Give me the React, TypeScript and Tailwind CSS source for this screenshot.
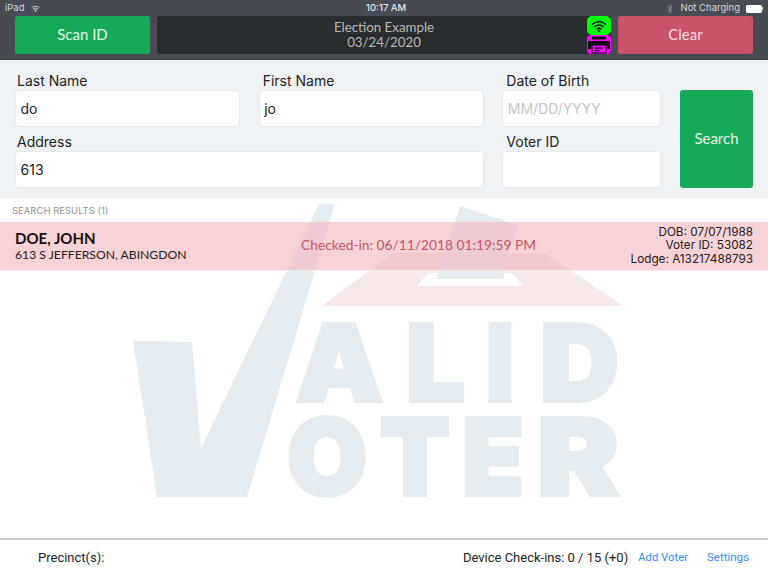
import React from "react";
import { Bluetooth } from "lucide-react";

const sf = "font-['Inter','Liberation_Sans',sans-serif]";
const avenir = "font-['Lato','Open_Sans',sans-serif]";

// x and width of each watermark letter, measured off the logo
const ALID = [
    { ch: "A", x: 294, w: 91 },
    { ch: "L", x: 404, w: 63 },
    { ch: "I", x: 484, w: 32 },
    { ch: "D", x: 538, w: 83 },
];
const OTER = [
    { ch: "O", x: 285, w: 84 },
    { ch: "T", x: 378, w: 74 },
    { ch: "E", x: 460, w: 66 },
    { ch: "R", x: 535, w: 86 },
];

function WifiIcon({ className, width = 1.6 }: { className?: string; width?: number }) {
    return (
        <svg viewBox="0 0 16 12" className={className} fill="none" stroke="currentColor" strokeWidth={width} strokeLinecap="round">
            <path d="M1.5 4.2a9.5 9.5 0 0 1 13 0" />
            <path d="M3.9 6.6a6 6 0 0 1 8.2 0" />
            <path d="M6.2 8.9a2.7 2.7 0 0 1 3.6 0" />
            <circle cx="8" cy="10.8" r="0.5" fill="currentColor" />
        </svg>
    );
}

function PrinterIcon() {
    return (
        <svg viewBox="0 0 24 19" className="w-[24px] h-[19px]">
            <rect x="0" y="0" width="24" height="19" rx="4" fill="#ff00ff" />
            <rect x="5" y="1.5" width="14" height="3" fill="#111" />
            <path d="M1 6h22v8h-3v-3H4v3H1z" fill="#111" />
            <rect x="5" y="10" width="14" height="8" fill="#ff00ff" stroke="#111" strokeWidth="1.2" />
            <rect x="7.5" y="12.5" width="8" height="1.2" fill="#111" />
            <rect x="7.5" y="15" width="5" height="1.2" fill="#111" />
        </svg>
    );
}

function Watermark() {
    const inset = 2;
    return (
        <svg viewBox="0 0 768 576" className="absolute inset-0 w-[768px] h-[576px]">
            <polygon points="393,253 545,253 623,306 322,306" fill="#f6e7e9" />
            <polygon points="428,273 512,273 523,286 417,286" fill="#ffffff" />
            <polygon points="460,206 518,225 503,279 436,279" fill="#e4ecf2" />
            <polygon points="133,341 192,342 201,448 319,204 335,204 247,497 157,497" fill="#e4ecf2" />
            <g fill="#e4ecf2" stroke="#e4ecf2" strokeWidth={inset * 2} strokeLinejoin="miter" strokeMiterlimit={2} fontFamily="Inter, 'Liberation Sans', sans-serif" fontWeight="900" fontSize="106">
                <text y={403 - inset}>
                    {ALID.map((l) => (
                        <tspan key={l.ch} x={l.x + inset} textLength={l.w - inset * 2} lengthAdjust="spacingAndGlyphs">{l.ch}</tspan>
                    ))}
                </text>
                <text y={497 - inset}>
                    {OTER.map((l) => (
                        <tspan key={l.ch} x={l.x + inset} textLength={l.w - inset * 2} lengthAdjust="spacingAndGlyphs">{l.ch}</tspan>
                    ))}
                </text>
            </g>
        </svg>
    );
}

function Field({ label, value, placeholder, className, inset = "pl-[4px]" }: { label: string; value?: string; placeholder?: string; className?: string; inset?: string }) {
    return (
        <div className={`flex flex-col ${className ?? ""}`}>
            <label className={`h-[18px] text-[14px] leading-[17px] text-[#222] ${inset}`}>{label}</label>
            <input
                readOnly
                value={value ?? ""}
                placeholder={placeholder}
                className="h-[37px] w-full rounded-[4px] border border-[#e6eaee] bg-white px-[4.5px] pb-[1px] text-[14px] text-[#222] outline-none placeholder:text-[#c4c7cb]"
            />
        </div>
    );
}

export default function App() {
    return (
        <div className={`relative flex h-[576px] w-[768px] flex-col overflow-hidden bg-white ${sf}`}>
            <Watermark />

            <header className="relative flex h-[60px] flex-col bg-[#474b54] border-b border-[#3d4047]">
                <div className="relative flex h-[16px] items-center justify-between pl-[5px] pr-[5px] pt-[1px] text-[9.5px] text-[#d4d6d9]">
                    <div className="flex items-center gap-[6px]">
                        <span>iPad</span>
                        <WifiIcon className="w-[9px] h-[7px]" />
                    </div>
                    <span className="absolute left-[366px] font-medium text-[#e6e7e9]">10:17 AM</span>
                    <div className="flex items-center gap-[5px]">
                        <Bluetooth className="w-[10px] h-[10px] text-[#8d9096]" />
                        <span>Not Charging</span>
                        <div className="ml-[1px] flex items-center">
                            <div className="h-[8px] w-[16px] rounded-[1.5px] bg-white" />
                            <div className="h-[3px] w-[1px] bg-[#c9cacc]" />
                        </div>
                    </div>
                </div>
                <div className="flex gap-[7px] pl-[15px] pr-[15px]">
                    <button className={`flex h-[38px] w-[135px] items-center justify-center rounded-[3px] bg-[#17a95a] pb-[2px] text-[15px] text-[#e3f4ea] ${avenir}`}>
                        Scan ID
                    </button>
                    <div className="relative flex h-[38px] flex-1 flex-col items-center justify-center rounded-[3px] bg-[#2a2d2f] pb-[1px] text-[13.3px] leading-[15px] text-[#b6b9bb]">
                        <span className={avenir}>Election Example</span>
                        <span className={avenir}>03/24/2020</span>
                        <div className="absolute right-0 top-0 flex flex-col">
                            <div className="flex h-[19px] w-[24px] items-center justify-center rounded-[5px] bg-[#00ff00] text-[#111]">
                                <WifiIcon className="w-[16px] h-[12px]" width={1.5} />
                            </div>
                            <PrinterIcon />
                        </div>
                    </div>
                    <button className={`flex h-[38px] w-[135px] items-center justify-center rounded-[3px] bg-[#c95368] pb-[2px] text-[15px] text-[#f3dde1] ${avenir}`}>
                        Clear
                    </button>
                </div>
            </header>

            <form className="relative grid h-[138px] grid-cols-[225px_225px_159px_73px] grid-rows-[55px_55px] gap-x-[18.67px] gap-y-[6px] bg-[#eff3f6] pl-[15px] pt-[12px]">
                <Field label="Last Name" value="do" inset="pl-[2px]" />
                <Field label="First Name" value="jo" />
                <Field label="Date of Birth" placeholder="MM/DD/YYYY" />
                <button
                    type="button"
                    className={`col-start-4 row-start-1 row-end-3 mt-[18px] rounded-[3px] bg-[#17a95a] pb-[2px] text-[15px] text-[#e3f4ea] ${avenir}`}
                >
                    Search
                </button>
                <Field label="Address" value="613" className="col-span-2" inset="pl-[2px]" />
                <Field label="Voter ID" />
            </form>

            <main className="relative flex-1">
                <div className="flex h-[24px] items-center pl-[12px] pt-[2px] text-[9.5px] text-[#8f9296]">
                    SEARCH RESULTS (1)
                </div>
                <div className={`flex h-[49px] items-center border-b border-[#ececec] bg-[#f3b6bb]/60 px-[15px] ${avenir}`}>
                    <div className="w-[286px] shrink-0 pb-[1px]">
                        <div className="text-[15px] font-bold leading-[18px] text-[#111]">DOE, JOHN</div>
                        <div className="text-[12.2px] leading-[15px] text-[#222]">613 S JEFFERSON, ABINGDON</div>
                    </div>
                    <div className="pb-[2px] text-[13.8px] text-[#c95368]">Checked-in: 06/11/2018 01:19:59 PM</div>
                    <div className={`ml-auto text-right text-[11.75px] leading-[13.5px] text-[#222] ${sf}`}>
                        <div>DOB: 07/07/1988</div>
                        <div>Voter ID: 53082</div>
                        <div>Lodge: A13217488793</div>
                    </div>
                </div>
            </main>

            <footer className="relative flex h-[38px] items-center border-t-2 border-[#cbcbcb] bg-white pl-[38px] pr-[19px] font-['Roboto',sans-serif] text-[13px] text-[#222]">
                <span>Precinct(s):</span>
                <span className="ml-auto">Device Check-ins: 0 / 15 (+0)</span>
                <a className="ml-[10px] text-[11.3px] text-[#2f8fff]">Add Voter</a>
                <a className="ml-[19px] text-[11.5px] text-[#2f8fff]">Settings</a>
            </footer>
        </div>
    );
}
